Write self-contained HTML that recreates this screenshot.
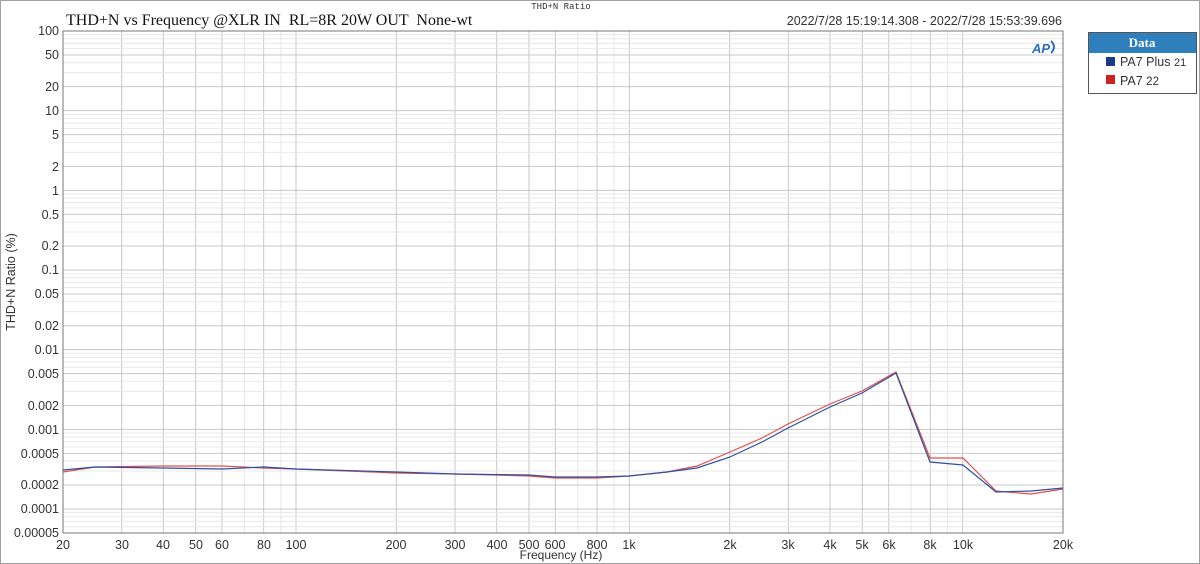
<!DOCTYPE html>
<html><head><meta charset="utf-8"><style>
html,body{margin:0;padding:0;background:#fff;width:1200px;height:564px;overflow:hidden}
.wrap{position:relative;width:1198px;height:562px;border:1px solid #a0a0a0;background:#fff}
svg{position:absolute;left:0;top:0}
.t{font-family:"Liberation Sans",sans-serif;font-size:12.5px;fill:#333}
text{white-space:pre}
</style></head><body><div class="wrap">
<svg width="1200" height="564" xmlns="http://www.w3.org/2000/svg">
<g id="grid"></g>
<rect x="62" y="30" width="1000" height="502" fill="none" stroke="#777" stroke-width="1"/>
<text x="560" y="8" font-family="Liberation Mono,monospace" font-size="9" fill="#333" text-anchor="middle">THD+N Ratio</text>
<text x="65" y="24" font-family="Liberation Serif,serif" font-size="16" fill="#111" xml:space="preserve">THD+N vs Frequency @XLR IN  RL=8R 20W OUT  None-wt</text>
<text x="1061" y="24" class="t" text-anchor="end" font-size="13">2022/7/28 15:19:14.308 - 2022/7/28 15:53:39.696</text>
<text x="1040" y="52" font-family="Liberation Sans,sans-serif" font-size="13" font-style="italic" font-weight="bold" fill="#2a6fc0" text-anchor="middle">AP</text>
<path d="M1050 40 q6 6 0 12" stroke="#2a6fc0" stroke-width="2" fill="none"/>
<g class="t" text-anchor="end">
<text x="58" y="34">100</text><text x="58" y="58">50</text><text x="58" y="90">20</text><text x="58" y="114">10</text><text x="58" y="138">5</text><text x="58" y="170">2</text><text x="58" y="194">1</text><text x="58" y="218">0.5</text><text x="58" y="249">0.2</text><text x="58" y="273">0.1</text><text x="58" y="297">0.05</text><text x="58" y="329">0.02</text><text x="58" y="353">0.01</text><text x="58" y="377">0.005</text><text x="58" y="409">0.002</text><text x="58" y="433">0.001</text><text x="58" y="457">0.0005</text><text x="58" y="488">0.0002</text><text x="58" y="512">0.0001</text><text x="58" y="536">0.00005</text>
</g>
<g class="t" text-anchor="middle">
<text x="62" y="548">20</text><text x="121" y="548">30</text><text x="162" y="548">40</text><text x="195" y="548">50</text><text x="221" y="548">60</text><text x="263" y="548">80</text><text x="295" y="548">100</text><text x="395" y="548">200</text><text x="454" y="548">300</text><text x="496" y="548">400</text><text x="528" y="548">500</text><text x="554" y="548">600</text><text x="596" y="548">800</text><text x="628" y="548">1k</text><text x="729" y="548">2k</text><text x="787" y="548">3k</text><text x="829" y="548">4k</text><text x="861" y="548">5k</text><text x="888" y="548">6k</text><text x="929" y="548">8k</text><text x="962" y="548">10k</text><text x="1062" y="548">20k</text>
<text x="560" y="558" font-size="12">Frequency (Hz)</text>
</g>
<text transform="translate(14,281) rotate(-90)" class="t" text-anchor="middle" font-size="12">THD+N Ratio (%)</text>
<polyline fill="none" stroke="#e05050" stroke-width="1.2" points="62,471 94,466 162,465 221,465 263,467 295,468 395,472 454,473 528,475 554,477 596,477 628,475 666,471 696,465 729,451 761,437 787,423 829,403 861,390 895,371 929,457 962,457 995,490 1030,493 1062,488"/>
<polyline fill="none" stroke="#3050a0" stroke-width="1.2" points="62,469 94,466 162,467 221,468 263,466 295,468 395,471 454,473 528,474 554,476 596,476 628,475 666,471 696,467 729,456 761,441 787,427 829,406 861,392 895,372 929,461 962,464 995,491 1030,490 1062,487"/>
<rect x="1087.5" y="31.5" width="108" height="61" fill="#fff" stroke="#555"/>
<rect x="1088" y="32" width="107" height="20" fill="#2f7fbd"/>
<text x="1141" y="46" font-family="Liberation Serif,serif" font-weight="bold" font-size="13" fill="#fff" text-anchor="middle">Data</text>
<rect x="1105" y="56" width="9" height="9" fill="#1a3a8a"/>
<text x="1119" y="65" class="t" font-size="12.5">PA7 Plus <tspan font-size="11">21</tspan></text>
<rect x="1105" y="74" width="9" height="9" fill="#cc2222"/>
<text x="1119" y="84" class="t" font-size="12.5">PA7 <tspan font-size="11.5">22</tspan></text>
</svg>
<script>
(function(){
var g=document.getElementById('grid'),h='';
function X(f){return 62+333.333*Math.log10(f/20);}
function Y(v){return 30+79.67*(2-Math.log10(v));}
for(var d=10;d<=10000;d*=10){for(var m=1;m<10;m++){var f=d*m;if(f<20||f>20000)continue;var x=X(f);var maj=(m==1||m==2||m==3||m==4||m==5||m==6||m==8);h+='<line x1="'+x+'" y1="30" x2="'+x+'" y2="532" stroke="'+(maj?'#c8c8c8':'#e8e8e8')+'"/>';}}
for(var e=-5;e<=1;e++){var d2=Math.pow(10,e);for(var m2=1;m2<10;m2++){var v=d2*m2;if(v<0.00005-1e-12||v>100)continue;var y=Y(v);var maj2=(m2==1||m2==2||m2==5);h+='<line x1="62" y1="'+y+'" x2="1062" y2="'+y+'" stroke="'+(maj2?'#c8c8c8':'#e8e8e8')+'"/>';}}
g.innerHTML=h;
})();
</script>
</div></body></html>
